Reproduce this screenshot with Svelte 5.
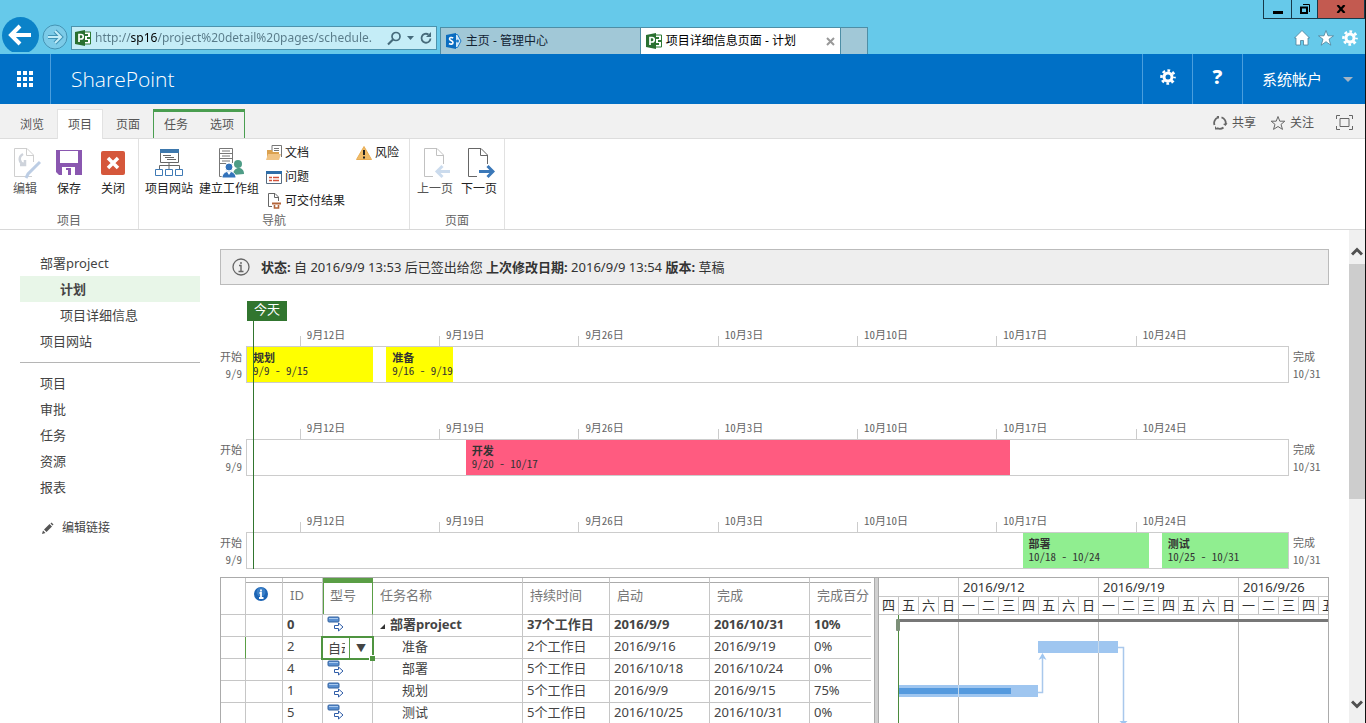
<script>
	const totalDays = 52.35;
	const pct = (days) => (days / totalDays) * 100;

	const ticks = [
		{ day: 3, label: '9月12日' },
		{ day: 10, label: '9月19日' },
		{ day: 17, label: '9月26日' },
		{ day: 24, label: '10月3日' },
		{ day: 31, label: '10月10日' },
		{ day: 38, label: '10月17日' },
		{ day: 45, label: '10月24日' }
	];

	const timelines = [
		[
			{ name: '规划', range: '9/9 - 9/15', start: 0, end: 6.35, color: 'yellow' },
			{ name: '准备', range: '9/16 - 9/19', start: 7, end: 10.35, color: 'yellow' }
		],
		[{ name: '开发', range: '9/20 - 10/17', start: 11, end: 38.35, color: 'pink' }],
		[
			{ name: '部署', range: '10/18 - 10/24', start: 39, end: 45.35, color: 'green' },
			{ name: '测试', range: '10/25 - 10/31', start: 46, end: 52.35, color: 'green' }
		]
	];

	const rows = [
		{ id: 0, name: '部署project', duration: '37个工作日', start: '2016/9/9', finish: '2016/10/31', done: '10%', summary: true },
		{ id: 2, name: '准备', duration: '2个工作日', start: '2016/9/16', finish: '2016/9/19', done: '0%', editing: true },
		{ id: 4, name: '部署', duration: '5个工作日', start: '2016/10/18', finish: '2016/10/24', done: '0%' },
		{ id: 1, name: '规划', duration: '5个工作日', start: '2016/9/9', finish: '2016/9/15', done: '75%' },
		{ id: 5, name: '测试', duration: '5个工作日', start: '2016/10/25', finish: '2016/10/31', done: '0%' }
	];

	const weeks = ['2016/9/12', '2016/9/19', '2016/9/26'];
	const days = '四五六日一二三四五六日一二三四五六日一二三四五'.split('');

	let type = $state('自动');
	let address = $state('http://sp16/project%20detail%20pages/schedule.');
</script>

{#snippet gear(size)}
	<svg width={size} height={size} viewBox="0 0 16 16" fill="none" stroke="currentColor">
		<circle cx="8" cy="8" r="4" stroke-width="3" />
		<circle cx="8" cy="8" r="6.500" stroke-width="2.600" stroke-dasharray="2.700 2.405" stroke-dashoffset="1.350" />
	</svg>
{/snippet}

{#snippet projectLogo()}
	<svg width="16" height="16" viewBox="0 0 16 16">
		<path d="M9 2h6.500v12H9z" fill="#fff" stroke="#2f7a35" />
		<path d="M10 4h3v2h-3zM12 7h3v2h-3zM10 10h3v2h-3z" fill="#2f7a35" />
		<path d="M0 2l10-2v16L0 14z" fill="#2a7030" />
		<path d="M4 12V4.500h2a2 2 0 0 1 0 4.500H4" fill="none" stroke="#fff" stroke-width="1.700" />
	</svg>
{/snippet}

{#snippet page(arrow)}
	<svg width="32" height="32" viewBox="0 0 32 32" fill="none" stroke="#666">
		<path d="M14 29.500H5.500v-28H18l6.500 6.500v9M17.500 1.500v7h7" />
		{#if arrow === 'next'}
			<path d="M16 24.500h13M24.500 19l5.500 5.500-5.500 5.500" stroke="#3b78b8" stroke-width="3" />
		{:else}
			<path d="M31 24.500H18M23.500 19L18 24.500l5.500 5.500" stroke="#7fa6d3" stroke-width="3" />
		{/if}
	</svg>
{/snippet}

<div class="window">
	<header class="chrome">
		<div class="nav">
			<button class="back" aria-label="back">
				<svg width="39" height="35" viewBox="0 0 39 35">
					<circle cx="19.500" cy="18.500" r="18.500" fill="#0b82c8" />
					<path d="M11 18h19M19 9l-9 9 9 9" fill="none" stroke="#fff" stroke-width="4" />
				</svg>
			</button>
			<button class="forward" aria-label="forward">
				<svg width="26" height="26" viewBox="0 0 26 26" fill="none">
					<circle cx="13" cy="13" r="12" fill="#7ccbe8" stroke="#4594b4" />
					<path d="M6 13h13M13 7l6 6-6 6" stroke="#3f92b5" stroke-width="4" />
					<path d="M6 13h13M13 7l6 6-6 6" stroke="#c3edf8" stroke-width="2" />
				</svg>
			</button>
			<div class="address">
				{@render projectLogo()}
				<input type="text" aria-label="URL" bind:value={address} />
				<svg width="46" height="16" viewBox="0 0 46 16" fill="none" stroke="#466b7b">
					<circle cx="9" cy="6.500" r="4" stroke-width="1.700" />
					<path d="M6 9.500l-5 5" stroke-width="2.200" />
					<path d="M20 6h7l-3.500 4z" fill="#466b7b" stroke="none" />
					<path d="M43.500 8.500a4.500 4.500 0 1 1-2-4" stroke-width="1.800" />
					<path d="M44 2v5h-5z" fill="#466b7b" stroke="none" />
				</svg>
			</div>
		</div>
		<nav class="tabs">
			<a class="tab" href="#home">
				<svg width="16" height="16" viewBox="0 0 16 16">
					<path d="M9 1.500h2.500l3.500 6.500-3.500 6.500H9z" fill="#cfe8f8" stroke="#1d7ccc" />
					<circle cx="11.500" cy="8" r="1.500" fill="#1d7ccc" />
					<path d="M0 2l10-2v16L0 14z" fill="#0a6cc0" />
					<path d="M7.200 5C5.500 4 3.500 4.500 3.500 6S7 7.500 7 9.500s-2.500 2-4 1" fill="none" stroke="#fff" stroke-width="1.600" />
				</svg>
				主页 - 管理中心
			</a>
			<a class="tab active" href="#plan">
				{@render projectLogo()}
				<span>项目详细信息页面 - 计划</span>
				<svg width="9" height="9" viewBox="0 0 9 9"><path d="M1 1l7 7M8 1L1 8" stroke="#999" stroke-width="2" /></svg>
			</a>
			<button class="newtab" aria-label="new tab"></button>
		</nav>
		<div class="corner">
			<div class="winbuttons">
				<button class="min" aria-label="minimize">
					<svg width="10" height="10"><path d="M0 7h10v3H0z" /></svg>
				</button>
				<button class="restore" aria-label="restore">
					<svg width="10" height="10" viewBox="0 0 10 10" fill="none" stroke="#000"><path d="M1 3.500h6V9H1z" stroke-width="2" /><path d="M3 .5h6.500V8" /></svg>
				</button>
				<button class="close" aria-label="close">
					<svg width="10" height="8" viewBox="0 0 10 8"><path d="M1.500 0l7 8M8.500 0l-7 8" stroke="#000" stroke-width="2.200" /></svg>
				</button>
			</div>
			<div class="tools">
				<svg width="16" height="16" viewBox="0 0 16 16"><path d="M8 .5l7.500 7.500H14v7H9.500v-4.500h-3V15H2V8H.5z" fill="#fff" stroke="#4c8299" stroke-width=".8" /></svg>
				<svg width="16" height="16" viewBox="0 0 16 16"><path d="M8 .5l2 5.300h5.500L11 9.200l1.800 6L8 11.700l-4.800 3.500 1.800-6L.5 5.800H6z" fill="#fff" stroke="#4c8299" stroke-width=".8" /></svg>
				{@render gear(16)}
			</div>
		</div>
	</header>

	<div class="suitebar">
		<button class="launcher" aria-label="apps">
			<svg width="16" height="16" viewBox="0 0 16 16" fill="currentColor">
				<path d="M0 0h4v4H0zM6 0h4v4H6zM12 0h4v4h-4zM0 6h4v4H0zM6 6h4v4H6zM12 6h4v4h-4zM0 12h4v4H0zM6 12h4v4H6zM12 12h4v4h-4z" />
			</svg>
		</button>
		<a class="brand" href="#sharepoint">SharePoint</a>
		<button class="suitebtn" aria-label="settings">{@render gear(16)}</button>
		<button class="suitebtn help">?</button>
		<button class="user">系统帐户 <i></i></button>
	</div>

	<div class="ribbontabs">
		<a href="#browse">浏览</a>
		<a class="selected" href="#project">项目</a>
		<a href="#page">页面</a>
		<div class="context">
			<a href="#task">任务</a>
			<a href="#options">选项</a>
		</div>
		<div class="actions">
			<button>
				<svg width="16" height="16" viewBox="0 0 16 16" fill="none" stroke="#666" stroke-width="1.800">
					<path d="M2.500 10A5.800 5.800 0 0 1 6 2.500M9.500 2.300A5.800 5.800 0 0 1 13.500 9.500M11.500 12.500a5.800 5.800 0 0 1-6.500.5" />
					<path d="M4.500 1h2.500v3zM15.500 8l-2 3-2.500-2zM3 11v3.500h3z" fill="#666" stroke="none" />
				</svg>
				共享
			</button>
			<button>
				<svg width="16" height="16" viewBox="0 0 16 16" fill="none" stroke="#666"><path d="M8 1.500l1.800 4.700h5L11 9.400l1.500 5L8 11.500l-4.500 2.900 1.500-5L1.200 6.200h5z" /></svg>
				关注
			</button>
			<button class="focus" aria-label="focus">
				<svg width="17" height="15" viewBox="0 0 17 15" fill="none" stroke="#666"><path d="M4 3.500h9v8H4zM.5 4V.5H4M13 .5h3.500V4M16.500 11v3.500H13M4 14.500H.5V11" /></svg>
			</button>
		</div>
	</div>

	<div class="ribbon">
		<section>
			<div class="tools-row">
				<button class="big faded">
					<svg width="32" height="32" viewBox="0 0 32 32" fill="none" stroke="#8a8a8a">
						<path d="M23 29.500H5.500v-28H18l6.500 6.500v7M17.500 1.500v7h7" />
						<path d="M14 7c-5 3-4 9 1 10M11 18h5v-5" stroke="#8793a8" stroke-width="2.500" />
						<path d="M31 15L19 27l-2 4" stroke="#5a83bd" stroke-width="3" />
					</svg>
					编辑
				</button>
				<button class="big">
					<svg width="32" height="32" viewBox="0 0 32 32">
						<path d="M3 3h26v25H6l-3-3z" fill="#8a57b0" />
						<path d="M7 4h18v12H7zM9 20h13v8H9z" fill="#fff" />
						<path d="M13 21h5v7h-3v-5h-2z" fill="#8a57b0" />
					</svg>
					保存
				</button>
				<button class="big">
					<svg width="32" height="32" viewBox="0 0 32 32">
						<rect x="4" y="4" width="24" height="24" rx="2" fill="#d5573b" />
						<path d="M11 11l10 10M21 11L11 21" stroke="#fff" stroke-width="3.500" />
					</svg>
					关闭
				</button>
			</div>
			<h3>项目</h3>
		</section>
		<section>
			<div class="tools-row">
				<button class="big">
					<svg width="32" height="32" viewBox="0 0 32 32" fill="none" stroke="#666">
						<path d="M7.500 2.500h18v13h-18z" />
						<path d="M7 2h19v4H7z" fill="#3d78ad" stroke="none" />
						<path d="M10 8.500h8M12 10.500h9M14 12.500h9M16 16v6M6.500 22v-3.500h20V22" />
						<path d="M2.500 22.500h7v6h-7zM12.500 22.500h7v6h-7zM22.500 22.500h7v6h-7z" stroke="#3f7ab5" />
					</svg>
					项目网站
				</button>
				<button class="big">
					<svg width="32" height="32" viewBox="0 0 32 32">
						<path d="M10 29.500H6.500v-28h13V16M6 6.500h13M6 11.500h13M6 16.500h7M9 4h8M9 9h8M9 14h8" fill="none" stroke="#777" />
						<circle cx="25" cy="17" r="4" fill="#4e9c86" />
						<path d="M20 28c0-9 11-9 11-1z" fill="#4e9c86" />
						<circle cx="16" cy="20" r="4" fill="#3373bb" stroke="#fff" />
						<path d="M9 31c0-9 14-9 14 0z" fill="#3373bb" stroke="#fff" />
						<path d="M14 25l2 3 2-3z" fill="#fff" />
					</svg>
					建立工作组
				</button>
				<div class="small">
					<button>
						<svg width="16" height="16" viewBox="0 0 16 16">
							<path d="M6 6V.5h9.500V12M8 3.500h5M8 5.500h5" fill="none" stroke="#777" />
							<path d="M1 5h5l1 2h6v8H1z" fill="#dba14f" />
							<path d="M2 9h13l-2 6H0z" fill="#f0c384" />
						</svg>
						文档
					</button>
					<button>
						<svg width="16" height="16" viewBox="0 0 16 16">
							<path d="M.5 2.500h15v12H.5z" fill="#fff" stroke="#556b80" />
							<path d="M0 2h16v3H0z" fill="#2e6da8" />
							<path d="M3 8.500h3M7 8.500h6M3 11.500h3M7 11.500h6" stroke="#d0533c" stroke-width="1.600" />
						</svg>
						问题
					</button>
					<button>
						<svg width="16" height="16" viewBox="0 0 16 16" fill="none" stroke="#666">
							<path d="M6 13.500H2.500V.5H9L12.500 4v4M8.500.5v4h4" />
							<path d="M6 10.500h9" stroke="#b4653a" stroke-width="2" />
							<path d="M8.500 12v3h4v-3" stroke="#b4653a" stroke-width="1.600" />
						</svg>
						可交付结果
					</button>
				</div>
				<div class="small">
					<button>
						<svg width="16" height="16" viewBox="0 0 16 16">
							<path d="M8 1.500l7.500 13H.5z" fill="#f0bb68" stroke="#e8ad55" stroke-linejoin="round" />
							<path d="M8 5v5M8 11.500v2" stroke="#222" stroke-width="2" />
						</svg>
						风险
					</button>
				</div>
			</div>
			<h3>导航</h3>
		</section>
		<section>
			<div class="tools-row">
				<button class="big faded">{@render page('prev')} 上一页</button>
				<button class="big">{@render page('next')} 下一页</button>
			</div>
			<h3>页面</h3>
		</section>
	</div>

	<div class="content">
		<aside>
			<ul>
				<li><a href="#project">部署project</a></li>
				<li class="sub current"><a href="#plan">计划</a></li>
				<li class="sub"><a href="#detail">项目详细信息</a></li>
				<li><a href="#site">项目网站</a></li>
			</ul>
			<hr />
			<ul>
				<li><a href="#projects">项目</a></li>
				<li><a href="#approvals">审批</a></li>
				<li><a href="#tasks">任务</a></li>
				<li><a href="#resources">资源</a></li>
				<li><a href="#reports">报表</a></li>
			</ul>
			<a class="editlinks" href="#edit">
				<svg width="12" height="12" viewBox="0 0 12 12" fill="#555"><path d="M0 12l1-3.500 2.500 2.500zM2 7.500l5.500-5.500 2.500 2.500L4.500 10zM8.500 1.500L9.500.5 11.500 2.500 10.500 3.500z" /></svg>
				编辑链接
			</a>
		</aside>

		<main>
			<div class="status">
				<svg width="18" height="18" viewBox="0 0 18 18" fill="none" stroke="#666">
					<circle cx="9" cy="9" r="8" stroke-width="1.300" />
					<path d="M9 4v2M7 7.500h2V13M6.500 13.500h5" stroke-width="1.400" />
				</svg>
				<p><b>状态:</b> 自 2016/9/9 13:53 后已签出给您 <b>上次修改日期:</b> 2016/9/9 13:54 <b>版本:</b> 草稿</p>
			</div>

			<div class="timeline">
				<div class="today">今天</div>
				{#each timelines as bars}
					<div class="lane">
						<div class="edge left">开始<br />9/9</div>
						<div class="track">
							<div class="scale">
								{#each ticks as tick}
									<span style="left: {pct(tick.day)}%">{tick.label}</span>
								{/each}
							</div>
							<div class="box">
								{#each bars as bar}
									<div class="bar {bar.color}" style="left: {pct(bar.start)}%; width: {pct(bar.end - bar.start)}%">
										<b>{bar.name}</b>
										<span>{bar.range}</span>
									</div>
								{/each}
							</div>
						</div>
						<div class="edge">完成<br />10/31</div>
					</div>
				{/each}
			</div>

			<div class="grid">
				<div class="sheet">
					<table>
						<colgroup>
							<col class="c-row" /><col class="c-info" /><col class="c-id" /><col class="c-type" /><col class="c-name" />
							<col class="c-dur" /><col class="c-date" /><col class="c-date" /><col class="c-done" />
						</colgroup>
						<thead>
							<tr>
								<th></th>
								<th class="info">
									<svg width="14" height="14" viewBox="0 0 14 14">
										<circle cx="7" cy="7" r="7" fill="#1c64b4" />
										<circle cx="7" cy="5" r="4.500" fill="#5a9bdc" opacity=".5" />
										<path d="M7 2.500v2M5.500 6H7v5M5 11h4.500" stroke="#fff" stroke-width="1.800" fill="none" />
									</svg>
								</th>
								<th>ID</th>
								<th class="picked" id="type">型号</th>
								<th>任务名称</th>
								<th>持续时间</th>
								<th>启动</th>
								<th>完成</th>
								<th>完成百分</th>
							</tr>
						</thead>
						<tbody>
							{#each rows as row}
								<tr class:summary={row.summary} class:editing={row.editing}>
									<td></td>
									<td></td>
									<td>{row.id}</td>
									<td class="type">
										{#if row.editing}
											<div class="editor">
												<input type="text" aria-labelledby="type" bind:value={type} />
												<button>▼</button>
											</div>
										{:else}
											<svg width="18" height="17" viewBox="0 0 18 17">
												<rect x="1" y="1" width="11" height="5" rx="1" fill="#5a8fd0" stroke="#34639f" />
												<path d="M2 2.500h9" stroke="#a8c9ef" />
												<path d="M7.500 9.500h4V7l4.500 4-4.500 4v-2.500h-4z" fill="#fff" stroke="#2f5da8" />
											</svg>
										{/if}
									</td>
									<td class="name">
										{#if row.summary}<svg width="5" height="5"><path d="M5 0v5H0z" fill="#333" /></svg>{/if}{row.name}
									</td>
									<td>{row.duration}</td>
									<td>{row.start}</td>
									<td>{row.finish}</td>
									<td>{row.done}</td>
								</tr>
							{/each}
						</tbody>
					</table>
				</div>
				<div class="splitter"></div>
				<div class="gantt">
					<div class="weeks">
						<span class="rest"></span>
						{#each weeks as week}<span>{week}</span>{/each}
					</div>
					<div class="days">
						{#each days as day}<span>{day}</span>{/each}
					</div>
					<svg class="chart" width="100%" height="110">
						<path d="M79.500 0v110M219.500 0v110M359.500 0v110" stroke="#b8b8b8" />
						<path d="M19.500 0v110" stroke="#4b8a3c" />
						<rect x="19" y="4" width="100%" height="3" fill="#777" />
						<rect x="17" y="4" width="4" height="12" rx="1" fill="#7d9079" />
						<rect x="159" y="26" width="80" height="12" fill="#9fc6f0" />
						<rect x="20" y="70" width="139" height="12" fill="#9fc6f0" />
						<rect x="20" y="73" width="112" height="6" fill="#559ade" />
						<path d="M79.500 70v12M219.500 26v12" stroke="#c5d9ec" />
						<path d="M159 77.500h4.500V40M239 32.500h5.500V110" fill="none" stroke="#a9c8ec" stroke-width="1.500" />
						<path d="M163.500 38l4 7-4-2-4 2zM244.500 110l4-4h-8z" fill="#9fc6f0" />
					</svg>
				</div>
			</div>
		</main>

		<div class="scrollbar">
			<svg width="12" height="9" viewBox="0 0 12 9"><path d="M1 7.500l5-5 5 5" fill="none" stroke="#505050" stroke-width="3" /></svg>
			<div class="thumb"></div>
			<svg width="12" height="9" viewBox="0 0 12 9"><path d="M1 1.500l5 5 5-5" fill="none" stroke="#505050" stroke-width="3" /></svg>
		</div>
	</div>
</div>

<style>
:global(body) {
	background: #fff;
}
.window {
	box-sizing: border-box;
	display: flex;
	flex-direction: column;
	height: 100vh;
	overflow: hidden;
	border-right: 1px solid #111;
	font: 13px/20px "Noto Sans", "Noto Sans CJK SC", sans-serif;
	color: #444;
}
.window * {
	box-sizing: border-box;
}
button, input {
	font: inherit;
	color: inherit;
	background: none;
	border: 0;
	padding: 0;
	margin: 0;
}
a {
	color: inherit;
	text-decoration: none;
}
svg {
	display: block;
	flex: none;
}

/* browser */
.chrome {
	display: flex;
	flex: none;
	height: 54px;
	background: #66c9ea;
}
.nav {
	display: flex;
	align-items: flex-end;
	width: 32%;
	padding-bottom: 2px;
}
.back {
	margin-left: 1px;
}
.forward {
	margin: 0 3px 2px 2px;
}
.address {
	display: flex;
	align-items: center;
	flex: 1;
	height: 24px;
	margin-bottom: 2px;
	padding: 0 3px;
	gap: 4px;
	background: #c5edf7;
	border: 1px solid #4c93ad;
}
.address input {
	flex: 1;
	min-width: 0;
	font-size: 12px;
	color: transparent;
	background: linear-gradient(90deg, #587a88 36px, #000 36px, #000 62px, #587a88 62px);
	background-clip: text;
	-webkit-background-clip: text;
}
.tabs {
	display: flex;
	align-items: flex-end;
	margin-left: 3px;
	font-size: 12px;
	color: #123;
}
.tab, .newtab {
	display: flex;
	align-items: center;
	gap: 4px;
	width: 200px;
	height: 27px;
	padding: 0 5px;
	background: #a1c8d7;
	border: 1px solid #4d8ea6;
	border-width: 1px 0 0 1px;
}
.tab.active {
	background: #fff;
	color: #000;
}
.tab.active span {
	flex: 1;
}
.newtab {
	width: 28px;
	border-right-width: 1px;
}
.corner {
	display: flex;
	flex-direction: column;
	align-items: flex-end;
	gap: 11px;
	margin-left: auto;
}
.winbuttons {
	display: flex;
	height: 19px;
	border: 1px solid #16394a;
	border-top: 0;
}
.winbuttons button {
	display: flex;
	align-items: center;
	justify-content: center;
	border-right: 1px solid #16394a;
}
.winbuttons .min {
	width: 28px;
}
.winbuttons .restore {
	width: 26px;
}
.winbuttons .close {
	width: 46px;
	border: 0;
	background: #c35a50;
}
.tools {
	display: flex;
	gap: 8px;
	padding-right: 7px;
	color: #fff;
}

/* suite bar */
.suitebar {
	display: flex;
	flex: none;
	height: 50px;
	background: #0070c6;
	color: #fff;
}
.launcher {
	display: flex;
	align-items: center;
	justify-content: center;
	width: 51px;
	border-right: 1px solid #4a9edd;
}
.brand {
	flex: 1;
	padding-left: 20px;
	font: 300 21px/50px "Open Sans", sans-serif;
}
.suitebtn {
	display: flex;
	align-items: center;
	justify-content: center;
	width: 50px;
	padding-bottom: 4px;
	border-left: 1px solid #4a9edd;
}
.help {
	font-size: 20px;
	font-weight: 800;
}
.user {
	display: flex;
	align-items: center;
	justify-content: space-between;
	width: 123px;
	padding: 0 12px 0 19px;
	border-left: 1px solid #4a9edd;
	font-size: 15px;
}
.user i {
	border: 5px solid transparent;
	border-top-color: #a4b4c4;
	border-bottom: 0;
}

/* ribbon */
.ribbontabs {
	display: flex;
	align-items: flex-end;
	flex: none;
	gap: 2px;
	height: 35px;
	padding-left: 9px;
	background: #f1f1f1;
	border-bottom: 1px solid #ddd;
	font-size: 12px;
	color: #555;
}
.ribbontabs a {
	height: 29px;
	padding: 0 11px;
	line-height: 32px;
}
.ribbontabs .selected {
	height: 30px;
	margin-bottom: -1px;
	background: #fff;
	border: 1px solid #e2e2e2;
	border-bottom: 0;
	padding: 0 10px;
	line-height: 30px;
}
.context {
	display: flex;
	height: 29px;
	border: 2px solid #4a9e50;
	border-width: 3px 1px 0;
}
.ribbontabs .context a {
	height: 26px;
	line-height: 26px;
}
.ribbontabs .context a:first-child {
	padding-left: 10px;
}
.ribbontabs .context a:last-child {
	padding-right: 10px;
}
.actions {
	display: flex;
	align-items: center;
	gap: 14px;
	margin-left: auto;
	padding: 3px 12px 0 0;
	height: 34px;
}
.actions button {
	display: flex;
	align-items: center;
	gap: 4px;
}
.actions .focus {
	margin-left: 8px;
}
.ribbon {
	display: flex;
	flex: none;
	height: 91px;
	border-bottom: 1px solid #d8d8d8;
	font-size: 12px;
	color: #222;
}
.ribbon section {
	display: flex;
	flex-direction: column;
	justify-content: space-between;
	padding: 2px 3px 0;
	border-right: 1px solid #e1e1e1;
}
.tools-row {
	display: flex;
	height: 72px;
}
.ribbon h3 {
	margin: 0;
	font-size: 12px;
	line-height: 16px;
	font-weight: normal;
	text-align: center;
	color: #666;
}
.big {
	display: flex;
	flex-direction: column;
	align-items: center;
	min-width: 44px;
	padding: 6px 3px 0;
	line-height: 20px;
}
.faded {
	color: #555;
}
.faded svg {
	opacity: .4;
}
.small {
	padding: 0 3px 0 4px;
}
.small button {
	display: flex;
	align-items: center;
	gap: 3px;
	height: 24px;
	padding-right: 4px;
}

/* page */
.content {
	display: flex;
	flex: 1;
	min-height: 0;
}
aside {
	flex: none;
	width: 220px;
	padding: 20px 20px 0;
}
aside ul {
	list-style: none;
	margin: 0;
	padding: 0;
}
aside li {
	padding-left: 20px;
	line-height: 26px;
	height: 26px;
}
aside .sub {
	padding-left: 40px;
}
aside .current {
	background: #e8f6e8;
	font-weight: bold;
}
aside hr {
	margin: 8px 0 7px;
	border: 0;
	border-top: 1px solid #b5b5b5;
}
.editlinks {
	display: flex;
	align-items: center;
	gap: 8px;
	margin-top: 14px;
	padding-left: 22px;
	height: 28px;
	font-size: 12px;
}
main {
	flex: 1;
	min-width: 0;
	padding: 19px 20px 0 0;
}
.status {
	display: flex;
	align-items: center;
	gap: 11px;
	height: 36px;
	padding-left: 11px;
	background: #eee;
	border: 1px solid #bbb;
	color: #333;
}
.status p {
	margin: 0;
}
.timeline {
	position: relative;
	padding-top: 16px;
}
.timeline::after {
	content: "";
	position: absolute;
	left: 33px;
	top: 16px;
	bottom: 0;
	border-left: 1px solid #31752f;
}
.today {
	width: 40px;
	height: 20px;
	margin: 0 0 4px 27px;
	line-height: 17px;
	text-align: center;
	background: #31752f;
	color: #fff;
}
.lane {
	display: flex;
	margin-bottom: 35px;
	font: 11px/17px "Noto Sans CJK SC", sans-serif;
	font-feature-settings: "hwid";
	color: #666;
}
.lane:last-child {
	margin-bottom: 0;
}
.edge {
	width: 40px;
	padding: 23px 0 0 4px;
}
.edge.left {
	width: 26px;
	padding: 23px 4px 0 0;
	text-align: right;
	white-space: nowrap;
}
.track {
	flex: 1;
}
.scale {
	position: relative;
	height: 21px;
	margin-left: 1px;
}
.scale span {
	position: absolute;
	top: 0;
	margin-left: -7px;
	padding: 1px 0 0 7px;
	white-space: nowrap;
}
.scale span::before {
	content: "";
	position: absolute;
	left: 0;
	top: 11px;
	height: 10px;
	border-left: 1px solid #ccc;
}
.box {
	position: relative;
	height: 37px;
	border: 1px solid #ccc;
}
.bar {
	position: absolute;
	top: 0;
	height: 35px;
	padding: 4px 0 0 6px;
	line-height: 13px;
	white-space: nowrap;
	color: #333;
}
.bar b, .bar span {
	display: block;
}
.yellow {
	background: #ff0;
}
.pink {
	background: #ff5b80;
}
.green {
	background: #90ee90;
}

/* sheet */
.grid {
	display: flex;
	margin-top: 8px;
	border: 1px solid #ababab;
}
.sheet {
	flex: none;
	width: 653px;
}
table {
	table-layout: fixed;
	width: 650px;
	border-spacing: 0;
}
.c-row { width: 25px; }
.c-info { width: 37px; }
.c-id { width: 40px; }
.c-type { width: 50px; }
.c-name { width: 150px; }
.c-dur { width: 87px; }
.c-date { width: 100px; }
.c-done { width: 61px; }
th, td {
	padding: 0 0 2px 4px;
	height: 22px;
	line-height: 19px;
	text-align: left;
	white-space: nowrap;
	overflow: hidden;
	border-right: 1px solid #c6c6c6;
	border-bottom: 1px solid #c6c6c6;
}
th:last-child, td:last-child {
	border-right: 0;
}
th {
	height: 37px;
	padding-left: 7px;
	font-weight: normal;
	color: #777;
	background: linear-gradient(#ababab, #ababab) 0 4px / 100% 1px no-repeat;
}
th:first-child {
	background: none;
}
th.info {
	padding: 0 0 5px 8px;
}
th.picked {
	border-right-color: #5a9e45;
	box-shadow: inset 1px 0 #5a9e45;
	background: linear-gradient(#5a9e45, #5a9e45) 0 0 / 100% 5px no-repeat;
}
.summary {
	font-weight: bold;
}
.name {
	padding-left: 29px;
}
.summary .name {
	padding-left: 7px;
}
.name svg {
	display: inline-block;
	margin-right: 5px;
}
.editing td:first-child {
	border-right-color: #5a9e45;
}
.type svg {
	margin-top: -1px;
}
.editing .type {
	position: relative;
	overflow: visible;
}
.editor {
	position: absolute;
	display: flex;
	left: -2px;
	top: -1px;
	width: 53px;
	height: 24px;
	background: #fff;
	border: 2px solid #4f9440;
}
.editor::after {
	content: "";
	position: absolute;
	right: -3px;
	bottom: -3px;
	width: 5px;
	height: 5px;
	background: #4f9440;
	border: solid #fff;
	border-width: 1px 0 0 1px;
}
.editor input {
	width: 17px;
	margin: 0 4px 0 5px;
}
.editor button {
	flex: 1;
	border-left: 1px solid #5a9e45;
	font-size: 10px;
	line-height: 20px;
}
.splitter {
	flex: none;
	width: 5px;
	background: #d0d0d0;
	border: solid #ababab;
	border-width: 0 1px;
}
.gantt {
	flex: 1;
	min-width: 0;
	overflow: hidden;
}
.weeks, .days {
	display: flex;
	overflow: hidden;
	color: #333;
}
.weeks {
	height: 19px;
	line-height: 18px;
	border-bottom: 1px solid #c6c6c6;
}
.weeks span {
	flex: none;
	width: 140px;
	padding-left: 4px;
	border-right: 1px solid #c6c6c6;
}
.weeks .rest {
	width: 80px;
}
.days {
	height: 18px;
	line-height: 17px;
	border-bottom: 1px solid #c6c6c6;
}
.days span {
	flex: none;
	width: 20px;
	text-align: center;
	border-right: 1px solid #c6c6c6;
}
.scrollbar {
	display: flex;
	flex-direction: column;
	align-items: center;
	flex: none;
	width: 16px;
	padding: 17px 0 14px;
	background: #f0f0f0;
}
.thumb {
	width: 100%;
	height: 235px;
	margin: 8px 0 auto;
	background: #cdcdcd;
}
</style>
